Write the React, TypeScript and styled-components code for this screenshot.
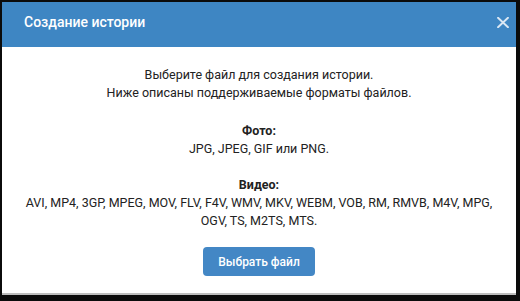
import React from "react";
import styled, { createGlobalStyle } from "styled-components";

const Global = createGlobalStyle`
  html, body { margin: 0; padding: 0; background: #000; }
  body { width: 520px; height: 301px; overflow: hidden; font-family: Roboto, "Noto Sans", Arial, sans-serif; }
`;

const Frame = styled.div`
  width: 520px;
  height: 301px;
  box-sizing: border-box;
  padding: 2px 4px 6px 2px;
  background: #0b0b0b;
`;

const Modal = styled.div`
  background: #fff;
  display: flex;
  flex-direction: column;
  height: 100%;
  border-bottom: 2px solid #bdbdbd;
  box-sizing: border-box;
`;

const Header = styled.div`
  height: 45px;
  box-sizing: border-box;
  background: #3e86c3;
  display: flex;
  align-items: center;
  justify-content: space-between;
  padding: 0 6px 5px 22px;
  flex-shrink: 0;
`;

const Title = styled.div`
  color: #fff;
  font-size: 14px;
  font-weight: 500;
`;

const Close = styled.button`
  border: 0;
  background: transparent;
  padding: 0;
  width: 14px;
  height: 14px;
  display: flex;
  align-items: center;
  justify-content: center;
  cursor: pointer;
`;

const Body = styled.div`
  display: flex;
  flex-direction: column;
  align-items: center;
  padding: 19px 16px 0;
  color: #222;
  font-size: 12.5px;
  line-height: 18px;
  text-align: center;
`;

const Para = styled.p<{ $gap: number }>`
  margin: ${(p) => p.$gap}px 0 0;
`;

const Label = styled.div`
  font-weight: 700;
`;

const Button = styled.button`
  margin-top: 17px;
  width: 112px;
  height: 29px;
  border: 0;
  border-radius: 4px;
  background: #4387c5;
  color: #fff;
  font-family: Roboto, "Noto Sans", Arial, sans-serif;
  font-size: 12px;
  font-weight: 500;
  cursor: pointer;
`;

export default function App() {
  return (
    <>
      <Global />
      <Frame>
        <Modal>
          <Header>
            <Title>Создание истории</Title>
            <Close aria-label="Закрыть">
              <svg width="12" height="11" viewBox="0 0 12 11">
                <path d="M1 0.8L11 10.2M11 0.8L1 10.2" stroke="#dbe8f4" strokeWidth="1.9" strokeLinecap="round" />
              </svg>
            </Close>
          </Header>
          <Body>
            <Para $gap={0}>
              Выберите файл для создания истории.
              <br />
              Ниже описаны поддерживаемые форматы файлов.
            </Para>
            <Para $gap={20}>
              <Label>Фото:</Label>
              JPG, JPEG, GIF или PNG.
            </Para>
            <Para $gap={18}>
              <Label>Видео:</Label>
              AVI, MP4, 3GP, MPEG, MOV, FLV, F4V, WMV, MKV, WEBM, VOB, RM, RMVB, M4V, MPG,
              <br />
              OGV, TS, M2TS, MTS.
            </Para>
            <Button>Выбрать файл</Button>
          </Body>
        </Modal>
      </Frame>
    </>
  );
}
